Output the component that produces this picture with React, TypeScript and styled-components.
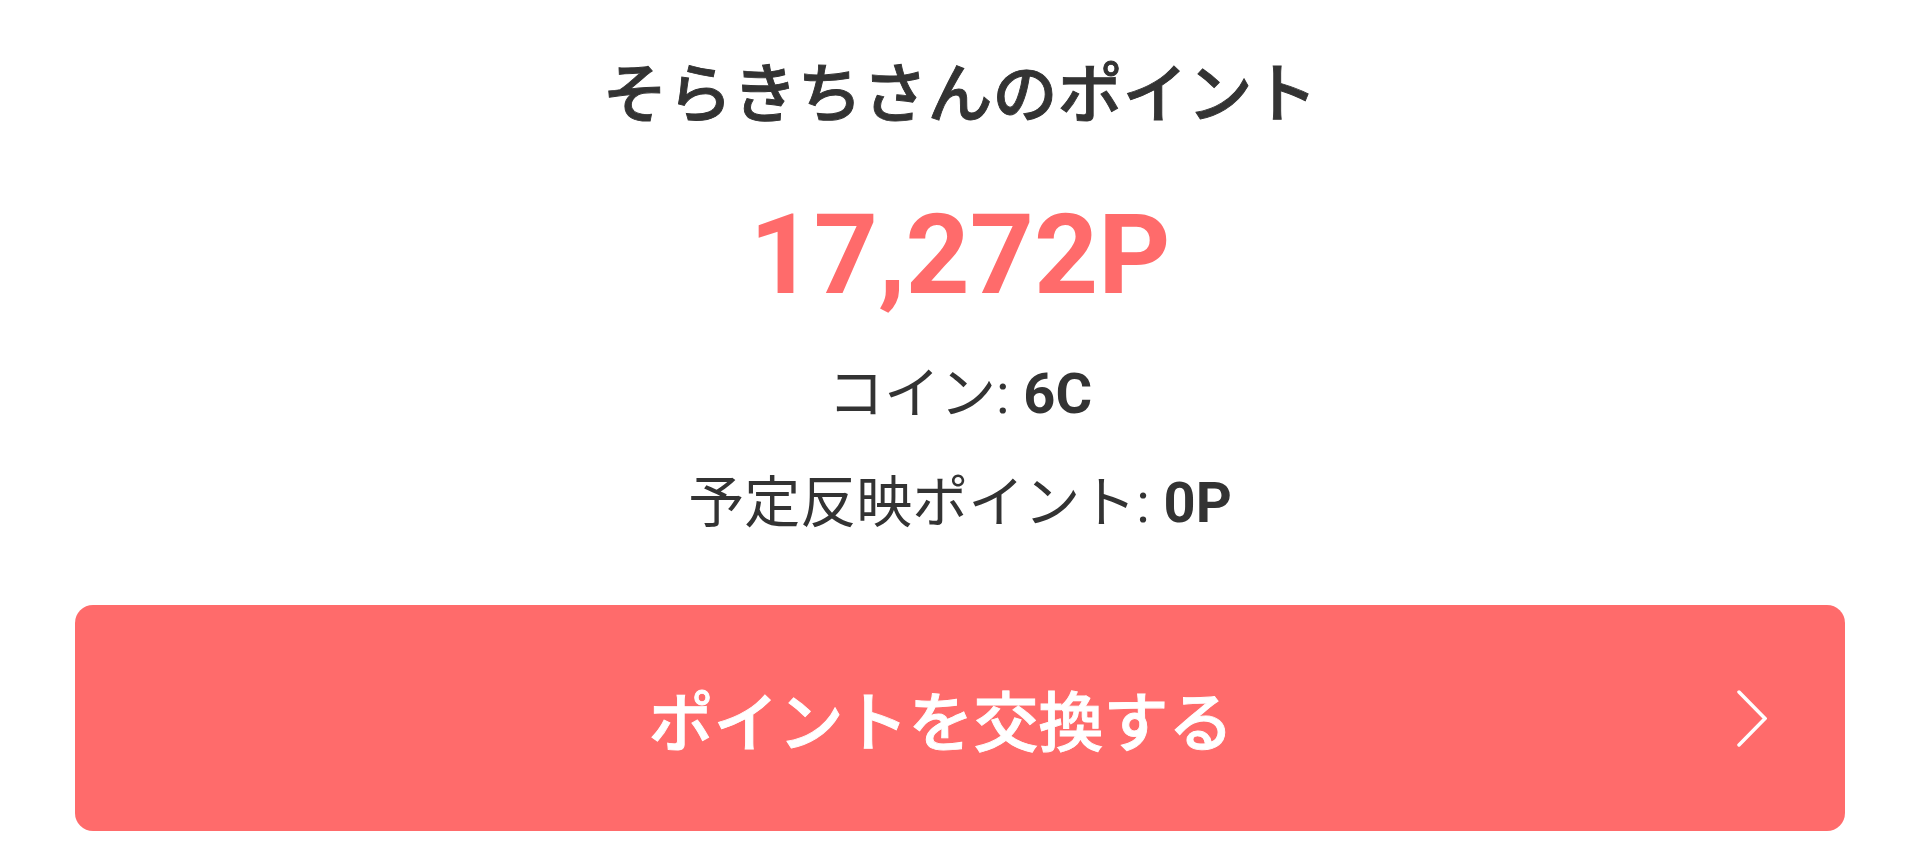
import * as React from "react";
import styled, {createGlobalStyle} from "styled-components";

const GlobalStyle = createGlobalStyle`
  html,
  body {
    margin: 0;
    padding: 0;
    background: #ffffff;
  }
  body {
    font-family: "Noto Sans CJK JP", "Roboto", sans-serif;
    color: #333333;
  }
`;

const accent = "#ff6b6b";
const jpFont = `"Noto Sans CJK JP", "Roboto", sans-serif`;
const jpMedium = `"Noto Sans CJK JP Medium", "Noto Sans CJK JP", "Roboto", sans-serif`;
const numFont = `"Roboto", "Noto Sans CJK JP", sans-serif`;

const Page = styled.div`
  display: flex;
  flex-direction: column;
  align-items: center;
  padding: 49px 75px 0;
  min-height: 851px;
  box-sizing: border-box;
`;

const Title = styled.h1`
  margin: 0;
  font-family: ${jpMedium};
  font-size: 65px;
  line-height: 80px;
  font-weight: 500;
  color: #333333;
  -webkit-text-stroke: 0.9px #333333;
`;

const Total = styled.div`
  margin-top: 70px;
  margin-bottom: 9px;
  font-family: ${numFont};
  font-size: 112px;
  line-height: 112px;
  font-weight: 700;
  color: ${accent};
`;

const InfoRow = styled.div`
  margin-top: 34px;
  font-family: ${jpFont};
  font-size: 56px;
  line-height: 70px;
  font-weight: 400;
  color: #333333;
  white-space: pre;
`;

const Colon = styled.span`
  font-family: ${numFont};
`;

const Value = styled.span`
  font-family: ${numFont};
  font-weight: 700;
`;

const ExchangeButton = styled.button`
  margin-top: 67px;
  width: 100%;
  height: 226px;
  display: flex;
  align-items: center;
  padding: 0 78px 0 70px;
  box-sizing: border-box;
  border: none;
  border-radius: 18px;
  background: ${accent};
  color: #ffffff;
  cursor: pointer;
`;

const ButtonLabel = styled.span`
  flex: 1;
  text-align: center;
  font-family: ${jpMedium};
  font-size: 65px;
  line-height: 80px;
  font-weight: 500;
  -webkit-text-stroke: 0.9px #ffffff;
`;

const Chevron = () => (
  <svg width="30" height="57" viewBox="0 0 30 57" fill="none">
    <polyline
      points="2,2 28,28.5 2,55"
      stroke="#ffffff"
      strokeWidth="3.5"
      strokeLinecap="round"
      strokeLinejoin="miter"
    />
  </svg>
);

export default function App() {
  return (
    <>
      <GlobalStyle />
      <Page>
        <Title>そらきちさんのポイント</Title>
        <Total>17,272P</Total>
        <InfoRow>
          コイン<Colon>: </Colon>
          <Value>6C</Value>
        </InfoRow>
        <InfoRow>
          予定反映ポイント<Colon>: </Colon>
          <Value>0P</Value>
        </InfoRow>
        <ExchangeButton>
          <ButtonLabel>ポイントを交換する</ButtonLabel>
          <Chevron />
        </ExchangeButton>
      </Page>
    </>
  );
}
